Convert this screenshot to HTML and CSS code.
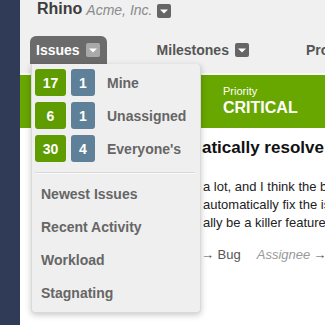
FILE: index.html
```html
<!DOCTYPE html>
<html>
<head>
<meta charset="utf-8">
<link rel="stylesheet" href="styles.css">
</head>
<body>
<div class="app">
  <aside class="sidebar"></aside>
  <main class="main">
    <header class="header">
      <span class="project">Rhino</span>
      <span class="org">Acme, Inc.</span>
      <span class="caret dark"><svg width="14" height="14" viewBox="0 0 14 14"><path d="M3 5.5h8L7 9.5z" fill="#fff"/></svg></span>
    </header>
    <nav class="nav">
      <div class="tab-wrap">
        <div class="tab active">Issues <span class="caret light"><svg width="14" height="14" viewBox="0 0 14 14"><path d="M3 5.5h8L7 9.5z" fill="#fff"/></svg></span></div>
        <div class="menu">
          <div class="row"><span class="badge green">17</span><span class="badge blue">1</span><span class="row-label">Mine</span></div>
          <div class="row"><span class="badge green">6</span><span class="badge blue">1</span><span class="row-label">Unassigned</span></div>
          <div class="row"><span class="badge green">30</span><span class="badge blue">4</span><span class="row-label">Everyone's</span></div>
          <div class="sep"></div>
          <div class="item">Newest Issues</div>
          <div class="item">Recent Activity</div>
          <div class="item">Workload</div>
          <div class="item">Stagnating</div>
        </div>
      </div>
      <div class="tab">Milestones <span class="caret dark"><svg width="14" height="14" viewBox="0 0 14 14"><path d="M3 5.5h8L7 9.5z" fill="#fff"/></svg></span></div>
      <div class="tab">Projects</div>
    </nav>
    <section class="band">
      <div class="band-label">Priority</div>
      <div class="band-value">CRITICAL</div>
    </section>
    <section class="content">
      <h1 class="title">atically resolve</h1>
      <p class="body">a lot, and I think the big<br>automatically fix the issue<br>ally be a killer feature.</p>
      <div class="meta"><span class="meta-val arrow">→ Bug</span><span class="meta-sep"></span><span class="meta-key">Assignee</span><span class="meta-val"> →</span></div>
    </section>
  </main>
</div>
</body>
</html>
```
FILE: styles.css
```css
html, body {
  margin: 0;
  padding: 0;
}
body {
  width: 325px;
  height: 325px;
  overflow: hidden;
  font-family: "Liberation Sans", Arial, sans-serif;
  background: #f0f0f0;
}
.app {
  display: flex;
  width: 325px;
  height: 325px;
}
.sidebar {
  width: 20px;
  flex: none;
  background: #2f3b57;
}
.main {
  flex: 1;
  min-width: 0;
  display: flex;
  flex-direction: column;
  overflow: hidden;
}
.header {
  height: 36px;
  padding-left: 17px;
  display: flex;
  align-items: flex-start;
  white-space: nowrap;
}
.project {
  font-size: 16px;
  font-weight: bold;
  line-height: 18px;
  color: #3d3d3d;
}
.org {
  font-size: 14px;
  font-style: italic;
  line-height: 18px;
  color: #8a8a8a;
  margin-left: 4px;
  margin-top: 1px;
}
.caret {
  width: 14px;
  height: 14px;
  border-radius: 2px;
  display: inline-flex;
  flex: none;
}
.caret.dark { background: #666; }
.caret.light { background: #a9a9a9; }
.header .caret {
  margin-left: 5px;
  margin-top: 4px;
}
.nav {
  height: 37px;
  border-bottom: 2px solid #f8f8f8;
  padding-left: 10px;
  display: flex;
  align-items: flex-start;
  gap: 44px;
  white-space: nowrap;
  position: relative;
  z-index: 2;
}
.tab-wrap {
  position: relative;
}
.tab {
  height: 28px;
  padding: 0 7px 0 6px;
  display: flex;
  align-items: center;
  gap: 6px;
  font-size: 14px;
  font-weight: bold;
  color: #555;
  border-radius: 6px 6px 0 0;
}
.tab.active {
  background: #6b6b6b;
  color: #fff;
}
.menu {
  position: absolute;
  top: 28px;
  left: 1px;
  width: 162px;
  height: 242px;
  padding: 5px 3px 1px 3px;
  background: #efefef;
  border: 1px solid #d9d9d9;
  border-top: none;
  border-radius: 0 4px 4px 4px;
  box-shadow: 0 2px 6px rgba(0, 0, 0, 0.22);
}
.row {
  display: flex;
  align-items: center;
  gap: 5px;
  margin-bottom: 6px;
}
.badge {
  height: 27px;
  border-radius: 3px;
  display: flex;
  align-items: center;
  justify-content: center;
  color: #fff;
  font-size: 14px;
  font-weight: bold;
}
.badge.green {
  width: 31px;
  background: #5e9c00;
}
.badge.blue {
  width: 24px;
  background: #5f8099;
}
.row-label {
  margin-left: 7px;
  font-size: 14px;
  font-weight: bold;
  color: #666;
}
.sep {
  height: 1px;
  background: #d9d9d9;
  border-bottom: 1px solid #fafafa;
  margin: 10px 2px 4px 0;
}
.item {
  height: 33px;
  line-height: 33px;
  padding-left: 6px;
  font-size: 14px;
  font-weight: bold;
  color: #666;
}
.band {
  height: 53px;
  background: #68a600;
  padding: 10px 0 0 203px;
  box-sizing: border-box;
  color: #fff;
}
.band-label {
  font-size: 11px;
  line-height: 13px;
}
.band-value {
  font-size: 16px;
  font-weight: bold;
  line-height: 19px;
}
.content {
  flex: 1;
  background: #fff;
  padding: 9px 0 0 182px;
  white-space: nowrap;
}
.title {
  margin: 0;
  font-size: 17px;
  font-weight: bold;
  line-height: 21px;
  color: #111;
}
.body {
  margin: 20px 0 0 1px;
  font-size: 13px;
  line-height: 18px;
  color: #222;
}
.meta {
  margin-top: 14px;
  font-size: 13px;
  line-height: 18px;
  display: flex;
  align-items: center;
}
.meta-val {
  color: #555;
}
.meta-val.arrow {
  margin-left: -1px;
}
.meta-sep {
  width: 1px;
  height: 15px;
  background: #ddd;
  margin: 0 7px 0 9px;
}
.meta-key {
  color: #999;
  font-style: italic;
  margin-right: 3px;
}
```
